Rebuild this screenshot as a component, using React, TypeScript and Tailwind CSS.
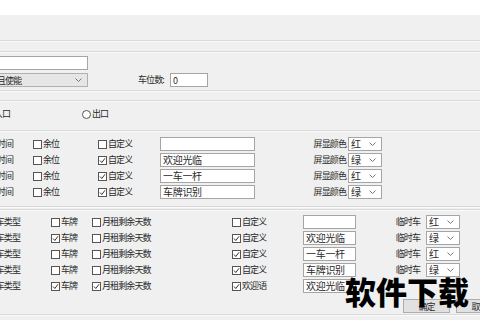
import React from 'react';

const font = { fontFamily: '"Noto Sans CJK SC", "Noto Sans", sans-serif' };

function Box({ checked }: { checked?: boolean }) {
  return (
    <svg width="9" height="9" viewBox="0 0 9 9" className="shrink-0">
      <rect x="0.5" y="0.5" width="8" height="8" fill="#fff" stroke="#555" />
      {checked && <polyline points="2,4.5 3.8,6.5 7,2.3" fill="none" stroke="#333" strokeWidth="1" />}
    </svg>
  );
}

function Check({ label, checked }: { label: string; checked?: boolean }) {
  return (
    <div className="flex items-center gap-[1px] whitespace-nowrap">
      <Box checked={checked} />
      <span>{label}</span>
    </div>
  );
}

function Chevron() {
  return (
    <svg width="7" height="4" viewBox="0 0 7 4" className="shrink-0">
      <polyline points="0.5,0.5 3.5,3.5 6.5,0.5" fill="none" stroke="#777" strokeWidth="1" />
    </svg>
  );
}

function ColorSelect({ value }: { value: string }) {
  return (
    <div className="flex h-[14px] w-[34px] items-center justify-between border border-[#a5a5a5] bg-white pl-[2px] pr-[5px] text-[10px] tracking-normal leading-none">
      <span>{value}</span>
      <Chevron />
    </div>
  );
}

function TextBox({ value, w }: { value: string; w: string }) {
  return (
    <div className={`flex h-[14px] items-center border border-[#a5a5a5] bg-white px-[2px] text-[10px] tracking-[-0.3px] leading-none ${w}`}>
      {value}
    </div>
  );
}

function Etched() {
  return <div className="h-[2px] border-t border-[#d9d9d9] border-b border-b-[#fafafa]" />;
}

const screenRows = [
  { custom: false, text: '', color: '红' },
  { custom: true, text: '欢迎光临', color: '绿' },
  { custom: true, text: '一车一杆', color: '红' },
  { custom: true, text: '车牌识别', color: '绿' },
];

const typeRows = [
  { plate: false, month: false, custom: false, label: '自定义', text: '', color: '红' },
  { plate: true, month: false, custom: true, label: '自定义', text: '欢迎光临', color: '绿' },
  { plate: false, month: false, custom: true, label: '自定义', text: '一车一杆', color: '红' },
  { plate: false, month: false, custom: true, label: '自定义', text: '车牌识别', color: '绿' },
  { plate: true, month: true, custom: true, label: '欢迎语', text: '欢迎光临', color: '' },
];

export default function App() {
  return (
    <div className="relative h-[320px] w-[480px] overflow-hidden bg-[#f0f0f0] text-[9px] tracking-[-0.9px] text-[#2a2a2a]" style={font}>
      <div className="h-[15px] bg-white" />
      <div className="h-[25px]" />
      <Etched />
      <div className="h-[9px]" />
      <Etched />

      {/* basic settings */}
      <div className="flex flex-col gap-[3px] pt-[3px]">
        <div className="-ml-[10px] h-[14px] w-[98px] border border-[#a5a5a5] bg-white" />
        <div className="flex items-center">
          <div className="-ml-[10px] flex h-[14px] w-[98px] items-center justify-between border border-[#b0b0b0] bg-[#e6e6e6] pl-[6px] pr-[5px] leading-none">
            <span>且使能</span>
            <Chevron />
          </div>
          <span className="ml-[50px] w-[32px] whitespace-nowrap">车位数:</span>
          <div className="flex h-[14px] w-[38px] items-center border border-[#a5a5a5] bg-white px-[2px] leading-none">0</div>
        </div>
      </div>
      <div className="h-[3px]" />
      <Etched />
      <div className="h-[8px]" />
      <Etched />

      {/* in / out */}
      <div className="flex h-[24px] items-center">
        <div className="flex w-[82px] justify-end pr-[72px] whitespace-nowrap">
          <span>入口</span>
        </div>
        <div className="flex items-center gap-[1px]">
          <svg width="9" height="9" viewBox="0 0 9 9">
            <circle cx="4.5" cy="4.5" r="4" fill="#fff" stroke="#555" />
          </svg>
          <span>出口</span>
        </div>
      </div>
      <div className="h-[4px]" />
      <Etched />

      {/* screen rows */}
      <div className="flex flex-col gap-[2px] pt-[5px]">
        {screenRows.map((r, i) => (
          <div key={i} className="flex h-[14px] items-center">
            <div className="flex w-[33px] justify-end pr-[20px] whitespace-nowrap">
              <span>时间</span>
            </div>
            <div className="w-[65px]">
              <Check label="余位" />
            </div>
            <div className="w-[62px]">
              <Check label="自定义" checked={r.custom} />
            </div>
            <TextBox value={r.text} w="w-[95px]" />
            <div className="flex w-[93px] justify-end pr-[2px] whitespace-nowrap">屏显颜色</div>
            <ColorSelect value={r.color} />
          </div>
        ))}
      </div>
      <div className="h-[7px]" />
      <Etched />
      <div className="h-[1px]" />
      <Etched />

      {/* vehicle type rows */}
      <div className="flex flex-col gap-[2px] pt-[4px]">
        {typeRows.map((r, i) => (
          <div key={i} className="flex h-[14px] items-center">
            <div className="flex w-[51px] justify-end pr-[31px] whitespace-nowrap">
              <span>车类型</span>
            </div>
            <div className="w-[41px]">
              <Check label="车牌" checked={r.plate} />
            </div>
            <div className="w-[140px]">
              <Check label="月租剩余天数" checked={r.month} />
            </div>
            <div className="w-[71px]">
              <Check label={r.label} checked={r.custom} />
            </div>
            <TextBox value={r.text} w="w-[53px]" />
            {r.color && (
              <>
                <div className="flex w-[70px] justify-end pr-[6px] whitespace-nowrap">临时车</div>
                <ColorSelect value={r.color} />
              </>
            )}
          </div>
        ))}
      </div>

      {/* buttons */}
      <div className="flex gap-[6px] pl-[403px] pt-[6px]">
        <div className="flex h-[14px] w-[47px] shrink-0 items-center justify-center border border-[#adadad] bg-[#e1e1e1] leading-none">确定</div>
        <div className="flex h-[14px] w-[47px] shrink-0 items-center justify-center border border-[#adadad] bg-[#e1e1e1] leading-none">取消</div>
      </div>
      <div className="h-[1px]" />
      <Etched />

      {/* watermark */}
      <div className="absolute left-[345px] top-[275px] text-[31px] font-black leading-none tracking-[0px] text-black whitespace-nowrap">
        软件下载
      </div>
    </div>
  );
}
